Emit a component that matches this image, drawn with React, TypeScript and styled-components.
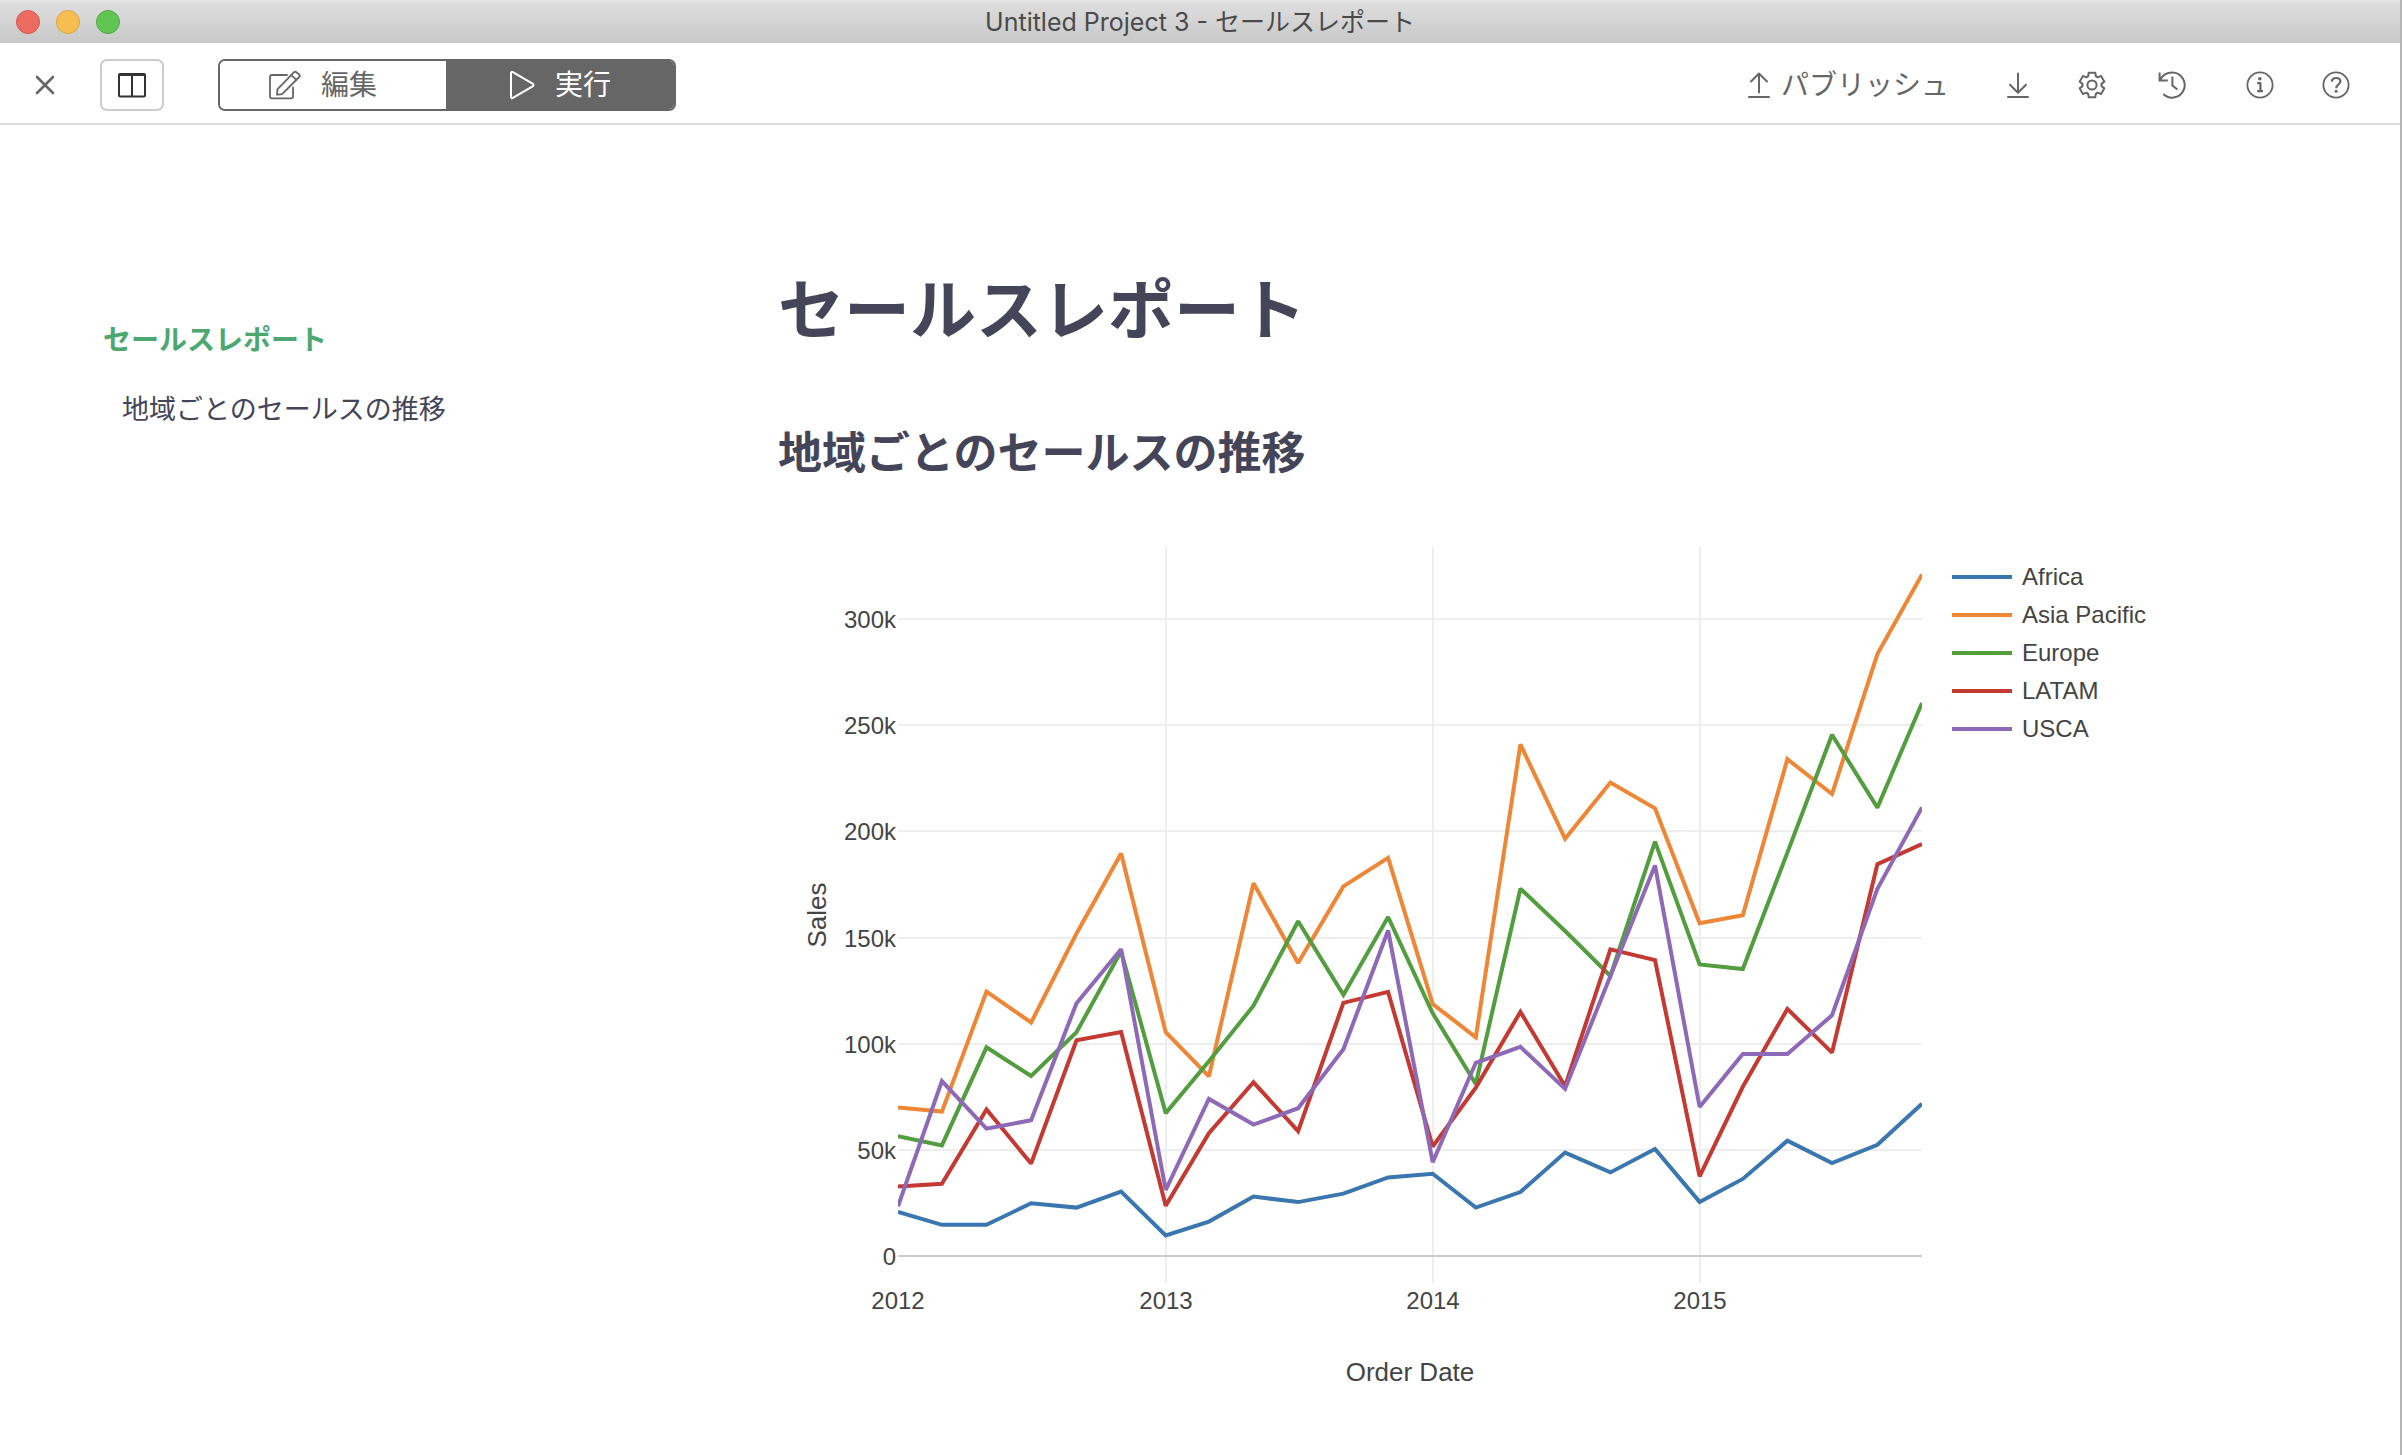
import React from "react";
import styled, { createGlobalStyle } from "styled-components";

const GlobalStyle = createGlobalStyle`
  *, *::before, *::after { box-sizing: border-box; }
  body {
    margin: 0;
    background: #fff;
    font-family: "Inter", "Noto Sans CJK JP", sans-serif;
  }
`;

const Window = styled.div`
  min-height: 100vh;
  display: flex;
  flex-direction: column;
  border-right: 2px solid #b4b4b4;
  background: #fff;
`;

const TitleBar = styled.header`
  display: grid;
  grid-template-columns: 1fr auto 1fr;
  align-items: center;
  height: 43px;
  padding: 0 16px;
  background: linear-gradient(#e6e6e6, #dedede 6%, #c8c8c8);
`;

const Lights = styled.div`
  display: flex;
  gap: 16px;
`;

const Light = styled.button<{ $fill: string; $edge: string }>`
  width: 24px;
  height: 24px;
  padding: 0;
  border: 1px solid ${(p) => p.$edge};
  border-radius: 50%;
  background: ${(p) => p.$fill};
`;

const WindowTitle = styled.div`
  color: #4a4a4a;
  font-size: 25px;
  line-height: 32px;
`;

const Toolbar = styled.div`
  display: flex;
  align-items: center;
  justify-content: space-between;
  height: 82px;
  padding: 3px 50px 0 31px;
  border-bottom: 2px solid #dcdcdc;
  color: #666;
`;

const ToolGroup = styled.div`
  display: flex;
  align-items: center;
`;

const Actions = styled(ToolGroup)`
  gap: 46px;
`;

const IconButton = styled.button<{ $before?: number }>`
  display: flex;
  align-items: center;
  justify-content: center;
  width: 28px;
  height: 28px;
  margin: 0 0 0 ${(p) => p.$before ?? 0}px;
  padding: 0;
  border: 0;
  background: none;
  color: inherit;
`;

const PublishButton = styled.button`
  display: flex;
  align-items: center;
  gap: 11px;
  padding: 0;
  margin-right: 9px;
  border: 0;
  background: none;
  color: inherit;
  font-family: inherit;
  font-size: 28px;
  line-height: 40px;
`;

const PanelButton = styled.button`
  display: flex;
  align-items: center;
  justify-content: center;
  width: 64px;
  height: 52px;
  margin: 0 54px 0 41px;
  padding: 0;
  border: 2px solid #ccc;
  border-radius: 7px;
  background: #fff;
  color: #333;
`;

const Segmented = styled.div`
  display: flex;
  height: 52px;
  border: 2px solid #666;
  border-radius: 7px;
  overflow: hidden;
`;

const Segment = styled.button<{ $active?: boolean }>`
  display: flex;
  align-items: center;
  gap: 20px;
  width: ${(p) => (p.$active ? 228 : 226)}px;
  padding: 0 0 0 ${(p) => (p.$active ? 63 : 49)}px;
  border: 0;
  background: ${(p) => (p.$active ? "#666" : "#fff")};
  color: ${(p) => (p.$active ? "#fff" : "#666")};
  font-family: inherit;
  font-size: 28px;
  line-height: 40px;
`;

const Body = styled.div`
  flex: 1;
  display: grid;
  grid-template-columns: 778px minmax(0, 1fr);
`;

const Outline = styled.nav`
  display: flex;
  flex-direction: column;
  align-items: flex-start;
  gap: 30px;
  padding: 195px 40px 0 103px;
`;

const OutlineLink = styled.a<{ $current?: boolean }>`
  margin-left: ${(p) => (p.$current ? 0 : 19)}px;
  color: ${(p) => (p.$current ? "#4ca771" : "#45455a")};
  font-size: ${(p) => (p.$current ? 28 : 27)}px;
  font-weight: ${(p) => (p.$current ? 700 : 400)};
  line-height: 40px;
  text-decoration: none;
`;

const Report = styled.main`
  padding: 137px 100px 40px 0;
  color: #45455a;
`;

const ReportTitle = styled.h1`
  margin: 0;
  font-size: 66px;
  font-weight: 700;
  line-height: 96px;
`;

const SectionTitle = styled.h2`
  margin: 63px 0 55px;
  font-size: 44px;
  font-weight: 700;
  line-height: 64px;
`;

const Figure = styled.figure`
  display: grid;
  grid-template-columns: minmax(0, 1fr) 348px;
  align-items: start;
  margin: 0;
`;

const Plot = styled.svg`
  display: block;
  width: 100%;
  height: auto;
  font-family: "Liberation Sans", Arial, sans-serif;
  fill: #444;
`;

const Legend = styled.ul`
  display: flex;
  flex-direction: column;
  margin: 0;
  padding: 18px 0 0;
  list-style: none;
  font-family: "Liberation Sans", Arial, sans-serif;
`;

const LegendItem = styled.li<{ $color: string }>`
  display: flex;
  align-items: center;
  gap: 10px;
  color: #444;
  font-size: 24px;
  line-height: 38px;

  &::before {
    content: "";
    width: 60px;
    height: 4px;
    background: ${(p) => p.$color};
  }
`;

type Series = { name: string; color: string; values: number[] };

// Sales in thousands, one value every two months from January 2012.
const series: Series[] = [
  {
    name: "Africa",
    color: "#3a76af",
    values: [20.8, 14.7, 14.7, 24.8, 22.8, 30.4, 9.7, 16.2, 28, 25.4, 29.4, 37, 38.7, 22.8, 30.1, 48.7, 39.4, 50.4, 25.5, 36.3, 54.3, 43.8, 52.4, 71.7],
  },
  {
    name: "Asia Pacific",
    color: "#ef8636",
    values: [70, 68, 124.6, 110, 151.9, 189.6, 105.4, 84.6, 175.6, 138, 174.1, 187.5, 118.7, 103, 241, 196.5, 223, 210.9, 156.7, 160.5, 234, 217.6, 283.5, 321],
  },
  {
    name: "Europe",
    color: "#529e3e",
    values: [56.5, 52.1, 98.3, 84.8, 105.4, 143.5, 67.3, 91.7, 117.9, 157.7, 123, 159.7, 114.3, 81, 173, 153.1, 131.9, 195.2, 137.3, 135.2, 190, 245.5, 211.2, 260.5],
  },
  {
    name: "LATAM",
    color: "#c43932",
    values: [32.8, 34, 69, 43.5, 101.6, 105.5, 23.7, 57.8, 81.8, 58.8, 119.2, 124.4, 51.6, 79.3, 115, 80, 144.4, 139.4, 37.5, 79.7, 116.4, 95.8, 184.6, 194],
  },
  {
    name: "USCA",
    color: "#8d69b8",
    values: [23.4, 82.4, 60, 63.9, 119.1, 144.5, 31.1, 74, 61.9, 69.6, 97.4, 153.3, 44.2, 91, 98.5, 78.7, 131.9, 184, 70.2, 95.2, 95.2, 113.4, 172.9, 211.3],
  },
];

const plot = { left: 120, right: 1144, top: 7, bottom: 743, zero: 716, step: 106.15 };

const DAY = 24 * 60 * 60 * 1000;
const start = Date.UTC(2012, 0, 1);
const end = Date.UTC(2015, 10, 1);
const days = (end - start) / DAY;

const xOf = (year: number, month: number) =>
  plot.left + ((Date.UTC(year, month, 1) - start) / DAY / days) * (plot.right - plot.left);
const yOf = (thousands: number) => plot.zero - (thousands / 50) * plot.step;

const pointsOf = (values: number[]) =>
  values.map((v, i) => `${xOf(2012, i * 2).toFixed(1)},${yOf(v).toFixed(1)}`).join(" ");

function SalesPlot() {
  return (
    <Plot viewBox="0 0 1174 860" role="img" aria-label="Sales / Order Date">
      <defs>
        <clipPath id="plot-area">
          <rect x={plot.left} y={plot.top} width={plot.right - plot.left} height={plot.bottom - plot.top} />
        </clipPath>
      </defs>
      <g fill="#eee">
        {[2013, 2014, 2015].map((year) => (
          <rect key={year} x={Math.round(xOf(year, 0)) - 1} y={plot.top} width="2" height={plot.bottom - plot.top} />
        ))}
        {[50, 100, 150, 200, 250, 300].map((v) => (
          <rect key={v} x={plot.left} y={Math.round(yOf(v)) - 1} width={plot.right - plot.left} height="2" />
        ))}
      </g>
      <rect x={plot.left} y={plot.zero - 1} width={plot.right - plot.left} height="2" fill="#ccc" />
      <g clipPath="url(#plot-area)" fill="none" strokeWidth="4" strokeMiterlimit="2">
        {series.map((s) => (
          <polyline key={s.name} points={pointsOf(s.values)} stroke={s.color} />
        ))}
      </g>
      <g fontSize="24" textAnchor="end">
        {[0, 50, 100, 150, 200, 250, 300].map((v) => (
          <text key={v} x={plot.left - 2} y={Math.round(yOf(v)) + 9}>
            {v === 0 ? "0" : `${v}k`}
          </text>
        ))}
      </g>
      <g fontSize="24" textAnchor="middle">
        {[2012, 2013, 2014, 2015].map((year) => (
          <text key={year} x={Math.round(xOf(year, 0))} y="769">
            {year}
          </text>
        ))}
      </g>
      <g fontSize="26" textAnchor="middle">
        <text x="632" y="841">Order Date</text>
        <text transform="translate(48 375) rotate(-90)">Sales</text>
      </g>
    </Plot>
  );
}

const stroke = {
  fill: "none",
  stroke: "currentColor",
  strokeWidth: 2,
  strokeLinecap: "round",
  strokeLinejoin: "round",
} as const;

const CloseIcon = () => (
  <svg width="28" height="28" viewBox="0 0 28 28" {...stroke} strokeWidth={2.6}>
    <path d="M6 6 22 22M22 6 6 22" />
  </svg>
);

const PanelIcon = () => (
  <svg width="28" height="26" viewBox="0 0 28 26" {...stroke}>
    <rect x="1" y="2" width="26" height="22.5" rx="1.5" />
    <path d="M14 3V24" />
    <path d="M2 2.6H26" strokeWidth="3" />
  </svg>
);

const EditIcon = () => (
  <svg width="32" height="30" viewBox="0 0 32 30" {...stroke} strokeWidth={1.8}>
    <path d="M18 5H3Q1 5 1 7V26.5Q1 28.3 3 28.3H22Q24 28.3 24 26.5V17.5" />
    <path d="M8 24.6 8.4 19.4 24.8 2.4Q26 1.2 27.4 2.3L30.2 4.5Q31.4 5.6 30.2 7L13.6 23.7Q13 24.4 12 24.4Z" />
    <path d="M22.3 5.2 27.4 9.8" />
  </svg>
);

const PlayIcon = () => (
  <svg width="26" height="30" viewBox="0 0 26 30" {...stroke}>
    <path d="M2 3.6Q2 .9 4.3 2.3L23.6 13.6Q25.4 15 23.6 16.4L4.3 27.7Q2 29.1 2 26.4Z" />
  </svg>
);

const UploadIcon = () => (
  <svg width="22" height="28" viewBox="0 0 22 28" {...stroke}>
    <path d="M11 21.5V2.5M3 10.5 11 2.5 19 10.5M1 26H21" />
  </svg>
);

const DownloadIcon = () => (
  <svg width="22" height="28" viewBox="0 0 22 28" {...stroke}>
    <path d="M11 2.5V21.5M3 13.8 11 21.8 19 13.8M1 26H21" />
  </svg>
);

const polar = (radius: number, degrees: number) => {
  const a = ((degrees - 90) * Math.PI) / 180;
  return `${(14 + radius * Math.cos(a)).toFixed(2)} ${(14 + radius * Math.sin(a)).toFixed(2)}`;
};

// Six teeth, each joined to the next by a slightly raised valley.
const gearPath =
  [0, 60, 120, 180, 240, 300]
    .map((a, i) =>
      [
        `${i ? "L" : "M"}${polar(10.2, a - 21)}`,
        `L${polar(12.8, a - 15)}`,
        `L${polar(12.8, a + 15)}`,
        `L${polar(10.2, a + 21)}`,
        `Q${polar(8.8, a + 26)} ${polar(9.8, a + 30)}`,
        `Q${polar(8.8, a + 34)} ${polar(10.2, a + 39)}`,
      ].join("")
    )
    .join("") + "Z";

const GearIcon = () => (
  <svg width="28" height="28" viewBox="0 0 28 28" {...stroke}>
    <path d={gearPath} />
    <circle cx="14" cy="14" r="4.6" />
  </svg>
);

const HistoryIcon = () => (
  <svg width="28" height="28" viewBox="0 0 28 28" {...stroke} strokeLinecap="butt" strokeLinejoin="miter">
    <path d="M1.6 1.5V9.5H9.8M1.8 9.2C4.6 4 9 1.6 14.2 1.6A12.5 12.5 0 1 1 5.4 23" />
    <path d="M14.4 5.5V14.5L19.4 18.5" />
  </svg>
);

const InfoIcon = () => (
  <svg width="28" height="28" viewBox="0 0 28 28" {...stroke} strokeLinecap="butt">
    <circle cx="14" cy="14" r="12.6" strokeWidth="1.8" />
    <circle cx="13.8" cy="7.8" r="1.8" fill="currentColor" stroke="none" />
    <path d="M11.2 12.2H14.4V20M11.2 20.2H17" strokeWidth="2.2" />
  </svg>
);

const HelpIcon = () => (
  <svg width="28" height="28" viewBox="0 0 28 28" {...stroke} strokeLinecap="butt">
    <circle cx="14" cy="14" r="12.6" strokeWidth="1.8" />
    <path d="M9.8 10.6C10 8.2 11.7 7 14.1 7S18.4 8.3 18.4 10.4C18.4 13.2 14.2 13.6 14.2 17.2" strokeWidth="2.2" />
    <circle cx="14.1" cy="20.3" r="1.5" fill="currentColor" stroke="none" />
  </svg>
);

export default function App() {
  return (
    <>
      <GlobalStyle />
      <Window>
        <TitleBar>
          <Lights>
            <Light aria-label="閉じる" $fill="#ed6b60" $edge="#d9574d" />
            <Light aria-label="しまう" $fill="#f6be50" $edge="#dba33c" />
            <Light aria-label="拡大" $fill="#61c554" $edge="#4fa840" />
          </Lights>
          <WindowTitle>Untitled Project 3 - セールスレポート</WindowTitle>
        </TitleBar>
        <Toolbar>
          <ToolGroup>
            <IconButton aria-label="レポートを閉じる">
              <CloseIcon />
            </IconButton>
            <PanelButton aria-label="パネル">
              <PanelIcon />
            </PanelButton>
            <Segmented>
              <Segment>
                <EditIcon />
                編集
              </Segment>
              <Segment $active>
                <PlayIcon />
                実行
              </Segment>
            </Segmented>
          </ToolGroup>
          <Actions>
            <PublishButton>
              <UploadIcon />
              パブリッシュ
            </PublishButton>
            <IconButton aria-label="ダウンロード">
              <DownloadIcon />
            </IconButton>
            <IconButton aria-label="設定">
              <GearIcon />
            </IconButton>
            <IconButton aria-label="履歴" $before={6}>
              <HistoryIcon />
            </IconButton>
            <IconButton aria-label="情報" $before={14}>
              <InfoIcon />
            </IconButton>
            <IconButton aria-label="ヘルプ" $before={2}>
              <HelpIcon />
            </IconButton>
          </Actions>
        </Toolbar>
        <Body>
          <Outline>
            <OutlineLink href="#report" $current>
              セールスレポート
            </OutlineLink>
            <OutlineLink href="#sales-by-region">地域ごとのセールスの推移</OutlineLink>
          </Outline>
          <Report>
            <ReportTitle id="report">セールスレポート</ReportTitle>
            <SectionTitle id="sales-by-region">地域ごとのセールスの推移</SectionTitle>
            <Figure>
              <SalesPlot />
              <Legend>
                {series.map((s) => (
                  <LegendItem key={s.name} $color={s.color}>
                    {s.name}
                  </LegendItem>
                ))}
              </Legend>
            </Figure>
          </Report>
        </Body>
      </Window>
    </>
  );
}
